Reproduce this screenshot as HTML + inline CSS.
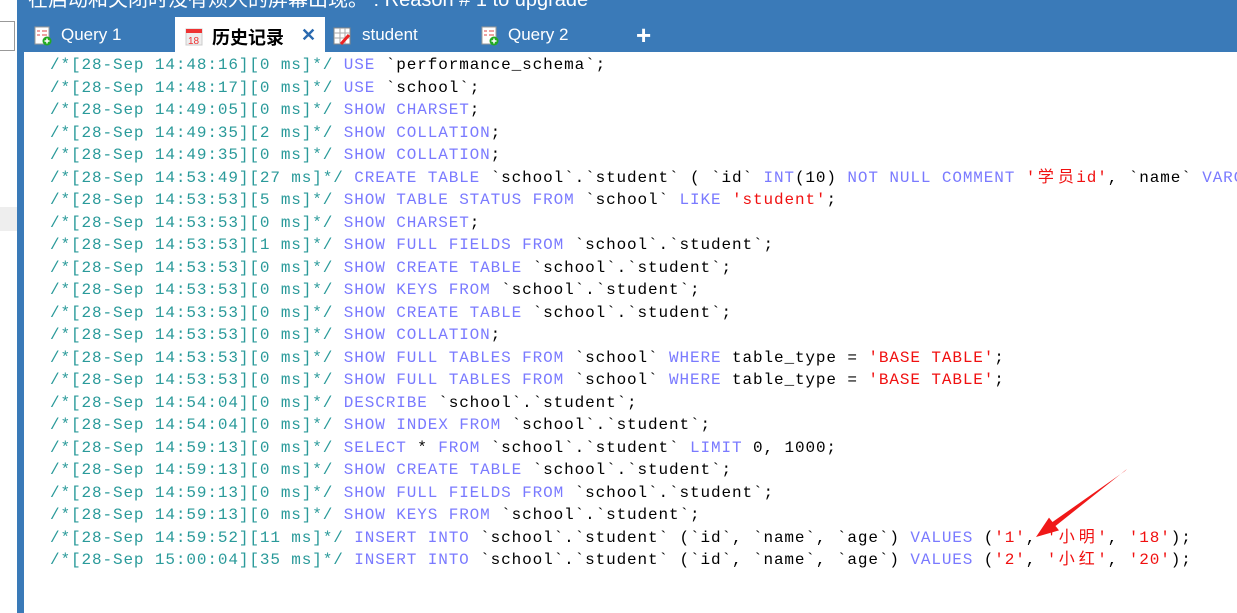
<!DOCTYPE html>
<html><head><meta charset="utf-8"><style>
body{margin:0;width:1237px;height:613px;overflow:hidden;background:#fff;position:relative;font-family:"Liberation Sans","Noto Sans CJK SC",sans-serif}
.bar{position:absolute;left:17px;top:0;width:1220px;height:52px;background:#3a7ab8}
.vbar{position:absolute;left:17px;top:0;width:7px;height:613px;background:#3a7ab8}
.title{position:absolute;left:28px;top:-17px;color:#fff;font-size:20px;white-space:nowrap}
.lbox{position:absolute;left:-2px;top:21px;width:15px;height:28px;border:1px solid #999;background:#fff}
.lgray{position:absolute;left:0;top:207px;width:17px;height:24px;background:#eee}
.tab{position:absolute;top:25px;color:#fff;font-size:17px;white-space:nowrap}
.act{position:absolute;left:175px;top:17px;width:150px;height:36px;background:#fff}
.code{position:absolute;left:50px;top:54px;font-family:"Liberation Mono","Noto Sans CJK SC",monospace;font-size:16px;letter-spacing:0.89px;line-height:22.5px;white-space:pre;color:#000}
.m{color:#2a9a9a}.k{color:#7a7aff}.s{color:#f01010}
.c{display:inline-block;width:20px;text-align:center;font-size:16px}
.ico{position:absolute;top:26px;width:18px;height:20px}
</style></head><body>
<div class="lbox"></div><div class="lgray"></div>
<div class="bar"></div><div class="vbar"></div>
<div class="title">在启动和关闭时没有烦人的屏幕出现。 : Reason # 1 to upgrade</div>
<div class="act"></div>
<svg class="ico" style="left:34px" viewBox="0 0 18 20"><rect x="1" y="1" width="14" height="17" fill="#fff" stroke="#999"/><path d="M3 5h3M8 5h5M3 9h3M8 9h5" stroke="#d44"/><circle cx="13" cy="15" r="4.5" fill="#2a2"/><path d="M13 12.5v5M10.5 15h5" stroke="#fff" stroke-width="1.5"/></svg>
<div class="tab" style="left:61px">Query 1</div>
<svg class="ico" style="left:185px" viewBox="0 0 18 20"><rect x="1" y="3" width="16" height="16" fill="#eee" stroke="#ccc"/><rect x="1" y="3" width="16" height="4" fill="#e33"/><text x="3" y="18" font-size="10" fill="#e33" font-family="Liberation Sans">18</text></svg>
<div class="tab" style="left:212px;color:#000;font-weight:bold;font-size:18px;top:24px">历史记录</div>
<div class="tab" style="left:301px;color:#2a6ab0;font-weight:bold;font-size:18px;top:25px">✕</div>
<svg class="ico" style="left:333px" viewBox="0 0 18 20"><rect x="1" y="2" width="16" height="16" fill="#fff" stroke="#888"/><path d="M1 7h16M1 12h16M7 2v16M12 2v16" stroke="#aaa"/><path d="M8 18l8-9" stroke="#e22" stroke-width="3"/></svg>
<div class="tab" style="left:362px">student</div>
<svg class="ico" style="left:481px" viewBox="0 0 18 20"><rect x="1" y="1" width="14" height="17" fill="#fff" stroke="#999"/><path d="M3 5h3M8 5h5M3 9h3M8 9h5" stroke="#d44"/><circle cx="13" cy="15" r="4.5" fill="#2a2"/><path d="M13 12.5v5M10.5 15h5" stroke="#fff" stroke-width="1.5"/></svg>
<div class="tab" style="left:508px">Query 2</div>
<div class="tab" style="left:636px;font-size:26px;top:20px;font-weight:bold">+</div>
<div class="code"><span class="m">/*[28-Sep 14:48:16][0 ms]*/</span> <span class="k">USE</span> `performance_schema`;
<span class="m">/*[28-Sep 14:48:17][0 ms]*/</span> <span class="k">USE</span> `school`;
<span class="m">/*[28-Sep 14:49:05][0 ms]*/</span> <span class="k">SHOW CHARSET</span>;
<span class="m">/*[28-Sep 14:49:35][2 ms]*/</span> <span class="k">SHOW COLLATION</span>;
<span class="m">/*[28-Sep 14:49:35][0 ms]*/</span> <span class="k">SHOW COLLATION</span>;
<span class="m">/*[28-Sep 14:53:49][27 ms]*/</span> <span class="k">CREATE TABLE</span> `school`.`student` ( `id` <span class="k">INT</span>(10) <span class="k">NOT NULL COMMENT</span> <span class="s">'<span class="c">学</span><span class="c">员</span>id'</span>, `name` <span class="k">VARCHAR</span>
<span class="m">/*[28-Sep 14:53:53][5 ms]*/</span> <span class="k">SHOW TABLE STATUS FROM</span> `school` <span class="k">LIKE</span> <span class="s">'student'</span>;
<span class="m">/*[28-Sep 14:53:53][0 ms]*/</span> <span class="k">SHOW CHARSET</span>;
<span class="m">/*[28-Sep 14:53:53][1 ms]*/</span> <span class="k">SHOW FULL FIELDS FROM</span> `school`.`student`;
<span class="m">/*[28-Sep 14:53:53][0 ms]*/</span> <span class="k">SHOW CREATE TABLE</span> `school`.`student`;
<span class="m">/*[28-Sep 14:53:53][0 ms]*/</span> <span class="k">SHOW KEYS FROM</span> `school`.`student`;
<span class="m">/*[28-Sep 14:53:53][0 ms]*/</span> <span class="k">SHOW CREATE TABLE</span> `school`.`student`;
<span class="m">/*[28-Sep 14:53:53][0 ms]*/</span> <span class="k">SHOW COLLATION</span>;
<span class="m">/*[28-Sep 14:53:53][0 ms]*/</span> <span class="k">SHOW FULL TABLES FROM</span> `school` <span class="k">WHERE</span> table_type = <span class="s">'BASE TABLE'</span>;
<span class="m">/*[28-Sep 14:53:53][0 ms]*/</span> <span class="k">SHOW FULL TABLES FROM</span> `school` <span class="k">WHERE</span> table_type = <span class="s">'BASE TABLE'</span>;
<span class="m">/*[28-Sep 14:54:04][0 ms]*/</span> <span class="k">DESCRIBE</span> `school`.`student`;
<span class="m">/*[28-Sep 14:54:04][0 ms]*/</span> <span class="k">SHOW INDEX FROM</span> `school`.`student`;
<span class="m">/*[28-Sep 14:59:13][0 ms]*/</span> <span class="k">SELECT</span> * <span class="k">FROM</span> `school`.`student` <span class="k">LIMIT</span> 0, 1000;
<span class="m">/*[28-Sep 14:59:13][0 ms]*/</span> <span class="k">SHOW CREATE TABLE</span> `school`.`student`;
<span class="m">/*[28-Sep 14:59:13][0 ms]*/</span> <span class="k">SHOW FULL FIELDS FROM</span> `school`.`student`;
<span class="m">/*[28-Sep 14:59:13][0 ms]*/</span> <span class="k">SHOW KEYS FROM</span> `school`.`student`;
<span class="m">/*[28-Sep 14:59:52][11 ms]*/</span> <span class="k">INSERT INTO</span> `school`.`student` (`id`, `name`, `age`) <span class="k">VALUES</span> (<span class="s">'1'</span>, <span class="s">'<span class="c">小</span><span class="c">明</span>'</span>, <span class="s">'18'</span>);
<span class="m">/*[28-Sep 15:00:04][35 ms]*/</span> <span class="k">INSERT INTO</span> `school`.`student` (`id`, `name`, `age`) <span class="k">VALUES</span> (<span class="s">'2'</span>, <span class="s">'<span class="c">小</span><span class="c">红</span>'</span>, <span class="s">'20'</span>);</div>
<svg style="position:absolute;left:0;top:0" width="1237" height="613"><path d="M1127 469 L1125 471 L1052.5 522 L1049 517.6 L1036 537 L1059 530.4 L1055.5 526 Z" fill="#f01818"/></svg>
</body></html>
